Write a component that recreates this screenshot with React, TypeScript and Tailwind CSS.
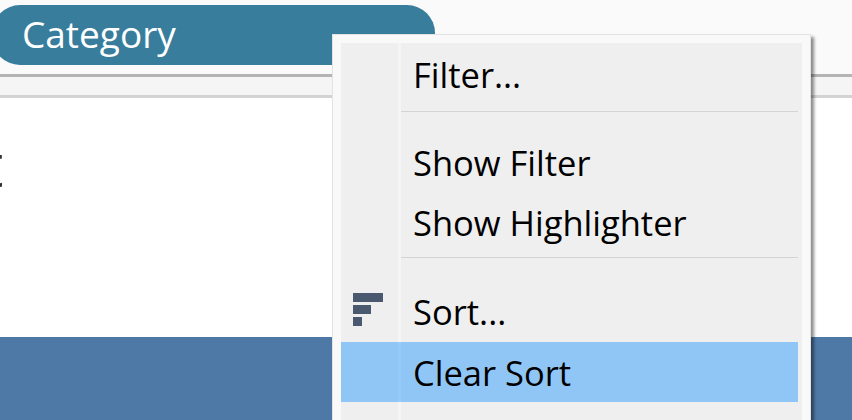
const menuFont = "font-['Open_Sans','Noto_Sans',sans-serif]";

function MenuRow({
  label,
  height = 'h-[60px]',
  active = false,
  icon,
}: {
  label?: string;
  height?: string;
  active?: boolean;
  icon?: React.ReactNode;
}) {
  return (
    <div className={`flex ${height}`}>
      <div className={`flex w-[57px] items-center justify-center ${active ? 'bg-[#90c6f6]' : 'bg-[#efefef]'}`}>{icon}</div>
      <div className={`w-[3px] ${active ? 'bg-[#97caf7]' : 'bg-[#f5f5f5]'}`} />
      <div className="flex-1 bg-[#efefef] pr-1">
        <div className={`flex h-full items-center pl-3 text-[34.5px] text-black ${active ? 'bg-[#90c6f6] pt-[2px]' : ''}`}>
          {label}
        </div>
      </div>
    </div>
  );
}

function Separator({ top, bottom }: { top: string; bottom: string }) {
  return (
    <div className="flex">
      <div className="w-[57px] bg-[#efefef]" />
      <div className="w-[3px] bg-[#f5f5f5]" />
      <div className="flex-1 bg-[#efefef] pr-1">
        <div className={top} />
        <div className="h-px bg-[#d4d4d4]" />
        <div className={bottom} />
      </div>
    </div>
  );
}

function SortIcon() {
  return (
    <svg width="30" height="33" viewBox="0 0 30 33" className="-mt-[5px] -ml-[3px]">
      <rect x="0" y="0" width="30" height="9" fill="#4a5870" />
      <rect x="0" y="12" width="18" height="9" fill="#4a5870" />
      <rect x="0" y="24" width="9" height="9" fill="#4a5870" />
    </svg>
  );
}

export default function App() {
  return (
    <div className="relative h-[420px] w-[852px] overflow-hidden bg-white font-['Open_Sans',sans-serif]">
      <div className="h-[74px] bg-[#fafafa] pt-[5px]">
        <div className="relative -ml-2 flex h-[60px] w-[443px] items-center rounded-[28px] bg-[#387d9c] pb-[3px] pl-[30px] text-[37px] text-white">
          Category
          <svg width="20" height="6" viewBox="0 0 20 6" className="absolute top-[30px] left-[380px]">
            <path d="M0 0H20L17 6H3Z" fill="#e6eff2" />
          </svg>
        </div>
      </div>
      <div className="h-[24px] border-y-[3px] border-t-[#b4b4b4] border-b-[#d3d3d3] bg-[#f5f5f5]" />
      <div className="h-[239px] overflow-hidden pt-[31px]">
        <div className="-ml-[18px] text-[60px] leading-[70px] font-medium text-[#2f3338]">t</div>
      </div>
      <div className="h-[83px] bg-[#4e79a7]" />

      <div className={`absolute top-[34px] left-[332px] h-[400px] w-[479px] border border-[#e3e3e3] bg-[#f9f9f9] p-2 shadow-[3px_3px_3px_rgba(0,0,0,0.45)] ${menuFont}`}>
        <MenuRow label="Filter..." height="h-[64px]" />
        <Separator top="h-[4px]" bottom="h-[21px]" />
        <MenuRow label="Show Filter" />
        <MenuRow label="Show Highlighter" height="h-[59px]" />
        <Separator top="h-[5px]" bottom="h-[24px]" />
        <MenuRow label="Sort..." icon={<SortIcon />} />
        <MenuRow label="Clear Sort" active />
        <MenuRow height="h-[40px]" />
      </div>
    </div>
  );
}
